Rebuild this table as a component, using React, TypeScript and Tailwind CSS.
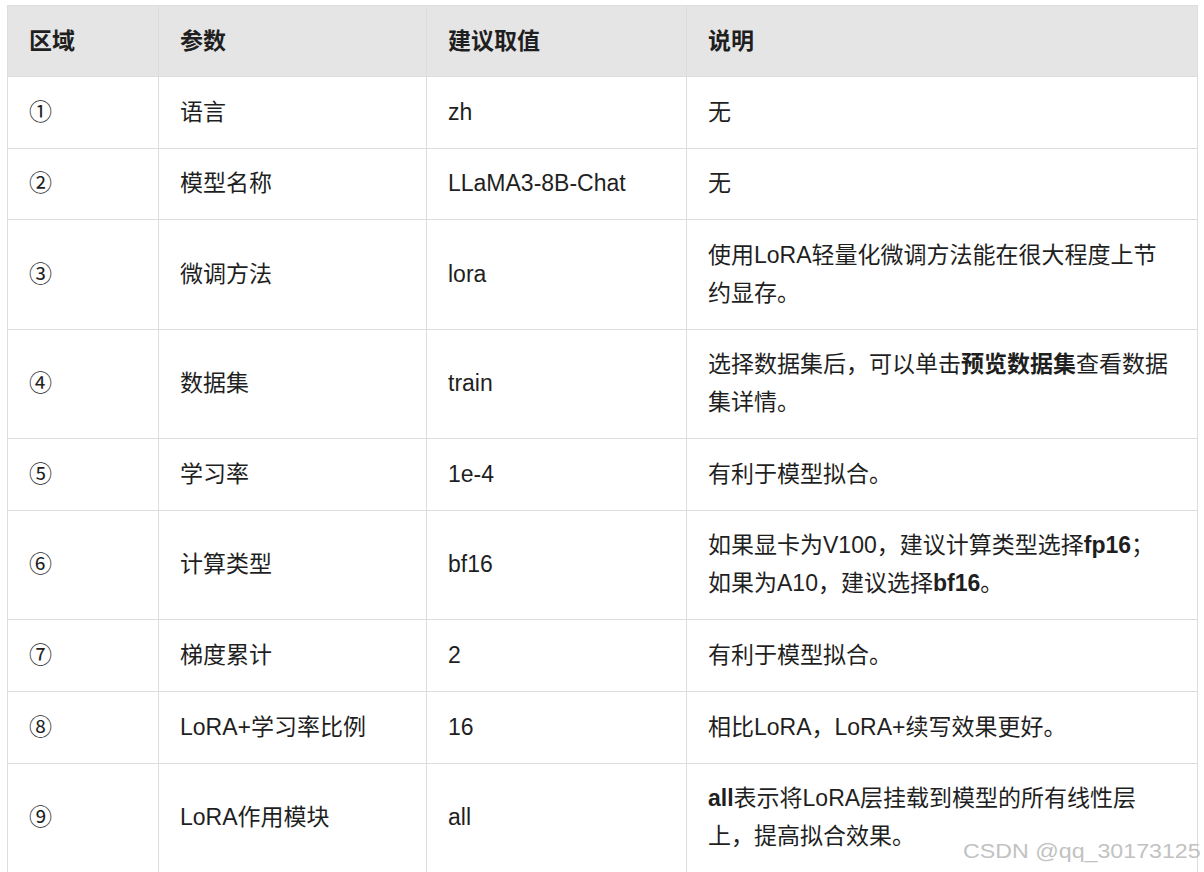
import React from "react";

type Row = {
  no: string;
  param: string;
  value: string;
  desc: React.ReactNode;
};

const rows: Row[] = [
  { no: "①", param: "语言", value: "zh", desc: "无" },
  { no: "②", param: "模型名称", value: "LLaMA3-8B-Chat", desc: "无" },
  {
    no: "③",
    param: "微调方法",
    value: "lora",
    desc: "使用LoRA轻量化微调方法能在很大程度上节约显存。",
  },
  {
    no: "④",
    param: "数据集",
    value: "train",
    desc: (
      <>
        选择数据集后，可以单击<b>预览数据集</b>查看数据集详情。
      </>
    ),
  },
  { no: "⑤", param: "学习率", value: "1e-4", desc: "有利于模型拟合。" },
  {
    no: "⑥",
    param: "计算类型",
    value: "bf16",
    desc: (
      <>
        如果显卡为V100，建议计算类型选择<b>fp16</b>；
        <br />
        如果为A10，建议选择<b>bf16</b>。
      </>
    ),
  },
  { no: "⑦", param: "梯度累计", value: "2", desc: "有利于模型拟合。" },
  {
    no: "⑧",
    param: "LoRA+学习率比例",
    value: "16",
    desc: "相比LoRA，LoRA+续写效果更好。",
  },
  {
    no: "⑨",
    param: "LoRA作用模块",
    value: "all",
    desc: (
      <>
        <b>all</b>表示将LoRA层挂载到模型的所有线性层
        <br />
        上，提高拟合效果。
      </>
    ),
  },
];

const cell = "border border-[#dddddd] px-[21px] py-[16.5px] align-middle";

export default function App() {
  return (
    <div
      className="relative h-[872px] w-[1204px] overflow-hidden bg-white pt-[5px] pl-[7px] text-[23px] leading-[37.7px] text-[#1f1f1f]"
      style={{ fontFamily: '"Liberation Sans", "Noto Sans CJK SC", sans-serif' }}
    >
      <table className="w-[1190px] table-fixed border-collapse text-left">
        <colgroup>
          <col className="w-[151px]" />
          <col className="w-[268px]" />
          <col className="w-[260px]" />
          <col className="w-[511px]" />
        </colgroup>
        <thead>
          <tr className="bg-[#e5e5e5]">
            {["区域", "参数", "建议取值", "说明"].map((h) => (
              <th key={h} className="border border-[#dddddd] px-[21px] py-4 font-bold leading-[38px]">
                {h}
              </th>
            ))}
          </tr>
        </thead>
        <tbody>
          {rows.map((r) => (
            <tr key={r.no}>
              <td className={cell}>{r.no}</td>
              <td className={cell}>{r.param}</td>
              <td className={cell}>{r.value}</td>
              <td className={cell}>{r.desc}</td>
            </tr>
          ))}
        </tbody>
      </table>

      <div className="absolute left-[963px] top-[839px] origin-left scale-x-[1.16] whitespace-nowrap text-[20px] leading-[24px] text-[#c2c2c2]">
        CSDN @qq_30173125
      </div>
    </div>
  );
}
